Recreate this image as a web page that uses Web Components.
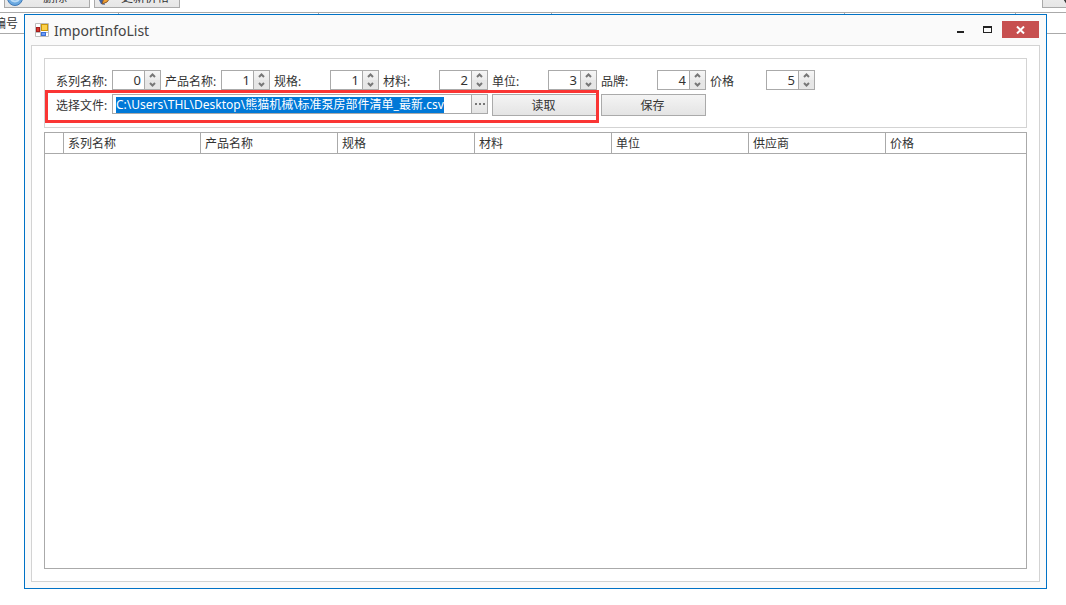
<!DOCTYPE html>
<html lang="zh-CN">
<head>
<meta charset="utf-8">
<title>ImportInfoList</title>
<style>
html, body { height: 100%; }
body { margin: 0; background: #fff; color: #333; overflow: hidden; font: 12px/16px "Noto Sans", "Noto Sans CJK SC", sans-serif; }
</style>
</head>
<body>
<desktop-shell>
  <main-screen></main-screen>
  <app-window slot="dialog" heading="ImportInfoList">
    <import-form></import-form>
    <data-grid columns="系列名称,产品名称,规格,材料,单位,供应商,价格"></data-grid>
  </app-window>
</desktop-shell>
<script>
const attach = (el, html) => { el.attachShadow({ mode: "open" }).innerHTML = html; return el.shadowRoot; };

customElements.define("desktop-shell", class extends HTMLElement {
  constructor() {
    super();
    attach(this, `<style>
      :host { display: block; position: relative; height: 100%; }
      .dialog { position: absolute; inset: 14px 19px 16px 24px; display: flex; }
      ::slotted(app-window) { flex: 1; min-width: 0; }
    </style><slot></slot><div class="dialog"><slot name="dialog"></slot></div>`);
  }
});

customElements.define("main-screen", class extends HTMLElement {
  constructor() {
    super();
    attach(this, `<style>
      :host { display: block; overflow: hidden; }
      .bar { display: flex; align-items: flex-end; gap: 4px; height: 8px; padding: 0 0 4px 4px; overflow: hidden; }
      button { box-sizing: border-box; width: 86px; height: 24px; flex: none; display: flex; align-items: center;
        padding: 4px 2px 0; border: 1px solid #aaa; background: linear-gradient(#f4f4f4, #e6e6e6); font: inherit; color: #333; white-space: nowrap; }
      span { flex: 1; text-align: center; }
      .last { margin-left: auto; width: 60px; margin-right: -36px; padding: 0 0 0 16px; }
      svg { flex: none; }
      table { width: calc(100% + 10px); margin-left: -10px; table-layout: fixed; border-collapse: collapse; }
      th { box-sizing: border-box; height: 21px; padding: 2px 4px 0 3px; border: 1px solid #aaa; font-weight: normal; text-align: left; }
      th:last-child { border-right: 0; }
    </style>
    <div class="bar">
      <button type="button"><svg width="16" height="16"><circle cx="8" cy="8" r="7.5" fill="#6aa8e0" stroke="#3f78b5"/><path d="M4 10q4 3 8 0" fill="none" stroke="#b9dbf7" stroke-width="2"/></svg><span>删除</span></button>
      <button type="button"><svg width="16" height="16"><path d="M1 8l5 2 2 5-4-1z" fill="#3f5f9f"/><path d="M5 14l2-6 6-7 3 3-6 8z" fill="#f0a030" stroke="#8a5a30"/></svg><span>更新价格</span></button>
      <button type="button" class="last" aria-label="更多"><svg width="16" height="16"><path d="M2 6l5 8 7-8" fill="none" stroke="#333" stroke-width="1.500"/></svg></button>
    </div>
    <table><colgroup><col width="128"><col width="200"><col width="233"><col width="293"><col width="171"><col></colgroup>
      <tr><th>编号</th><th></th><th></th><th></th><th></th><th></th></tr></table>`);
  }
});

customElements.define("app-window", class extends HTMLElement {
  constructor() {
    super();
    attach(this, `<style>
      :host { box-sizing: border-box; display: flex; flex-direction: column; border: 1px solid #0072c6; background: #fafafa; padding: 0 6px 6px; }
      header { display: flex; align-items: flex-start; height: 30px; }
      .icon { margin: 8px 5px 0 4px; flex: none; }
      h1 { margin: 6px auto 0 0; font-size: 14px; line-height: 20px; font-weight: normal; color: #444; }
      button { border: 0; padding: 0; margin-top: 6px; width: 27px; height: 17px; background: none; display: grid; place-items: center; }
      .close { width: 37px; background: #c75050; margin: 6px 1px 0; }
      main { flex: 1; display: flex; flex-direction: column; gap: 4px; border: 1px solid #d3d3d3; background: #fff; padding: 12px; }
      ::slotted(data-grid) { flex: 1; }
    </style>
    <header>
      <svg class="icon" width="14" height="14" viewBox="0 0 14 14">
        <path d="M.5.5h13v13H.5zM5.5.5v13M.5 4.5h5M.5 9.5h13" fill="#fff" stroke="#bdbdbd"/>
        <rect x="6.500" y="1.500" width="6" height="6" fill="#fcd14a" stroke="#c9960c"/>
        <rect x="1.500" y="4.500" width="3" height="4" fill="#d9372c" stroke="#a51d1d"/>
        <rect x="6.500" y="9.500" width="4" height="3" fill="#6a9cf5" stroke="#3a6fd8"/>
      </svg>
      <h1></h1>
      <button type="button" aria-label="Minimize"><svg width="9" height="9"><path d="M1 6h7v2H1z" fill="#222"/></svg></button>
      <button type="button" aria-label="Maximize"><svg width="9" height="7"><path d="M0 0h9v7H0zM1 2v4h7V2z" fill="#222" fill-rule="evenodd"/></svg></button>
      <button type="button" class="close" aria-label="Close"><svg width="9" height="8"><path d="M1 .5l7 7M8 .5l-7 7" stroke="#fff" stroke-width="2"/></svg></button>
    </header>
    <main><slot></slot></main>`);
  }
  connectedCallback() { this.shadowRoot.querySelector("h1").textContent = this.getAttribute("heading"); }
});

customElements.define("spin-field", class extends HTMLElement {
  constructor() {
    super();
    attach(this, `<style>
      :host { display: flex; width: 105px; height: 20px; }
      label { width: 56px; line-height: 24px; flex: none; white-space: nowrap; }
      .box { box-sizing: border-box; display: flex; width: 49px; height: 20px; border: 1px solid #aaa; background: #fff; }
      input { flex: 1; min-width: 0; box-sizing: border-box; border: 0; padding: 0 3px; margin: 0; background: none; text-align: right; font: inherit; font-size: 13px; color: #333; outline: 0; }
      .arrows { display: flex; flex-direction: column; width: 15px; border-left: 1px solid #aaa; }
      button { flex: 1; min-height: 0; border: 0; padding: 0; background: linear-gradient(#f6f6f6, #ececec); display: grid; place-items: center; }
      button + button { background: #e6e6e6; }
    </style>
    <label for="n"></label>
    <div class="box"><input id="n" type="text" inputmode="numeric">
      <div class="arrows">
        <button type="button" aria-label="+"><svg width="7" height="7"><path d="M1 5l2.500-2.500L6 5" fill="none" stroke="#777" stroke-width="2"/></svg></button>
        <button type="button" aria-label="-"><svg width="7" height="7"><path d="M1 2l2.500 2.500L6 2" fill="none" stroke="#777" stroke-width="2"/></svg></button>
      </div></div>`);
  }
  connectedCallback() {
    const r = this.shadowRoot, input = r.querySelector("input"), [up, down] = r.querySelectorAll("button");
    r.querySelector("label").textContent = this.getAttribute("label");
    input.value = this.getAttribute("value");
    up.onclick = () => { input.value = +input.value + 1; };
    down.onclick = () => { input.value = Math.max(0, input.value - 1); };
  }
});

customElements.define("import-form", class extends HTMLElement {
  constructor() {
    super();
    const fields = [["系列名称:", 0], ["产品名称:", 1], ["规格:", 1], ["材料:", 2], ["单位:", 3], ["品牌:", 4], ["价格", 5]];
    attach(this, `<style>
      :host { position: relative; box-sizing: border-box; display: flex; flex-direction: column; gap: 4px; border: 1px solid #d3d3d3; padding: 11px; }
      .row { display: flex; gap: 4px; align-items: flex-start; }
      .file { display: flex; width: 432px; height: 22px; }
      label { width: 56px; line-height: 24px; flex: none; }
      .box { flex: 1; box-sizing: border-box; display: flex; height: 20px; border: 1px solid #aaa; }
      input { flex: 1; min-width: 0; border: 0; padding: 1px 3px 0; margin: 0; outline: 0; font: inherit; color: #333; }
      input::selection { background: #0078d7; color: #fff; }
      button { box-sizing: border-box; width: 105px; height: 22px; padding: 2px 2px 0 0; border: 1px solid #aaa; background: linear-gradient(#f4f4f4, #e4e4e4); font: inherit; color: #333; }
      .browse { width: 16px; height: 18px; padding: 0; border-width: 0 0 0 1px; display: grid; place-items: center; }
      .mark { position: absolute; left: 0; top: 31px; width: 554px; height: 33px; box-sizing: border-box; border: 3px solid #fa3534; pointer-events: none; }
    </style>
    <div class="row">${fields.map(([f, v]) => `<spin-field label="${f}" value="${v}"></spin-field>`).join("")}</div>
    <div class="row">
      <div class="file"><label for="path">选择文件:</label>
        <div class="box"><input id="path" type="text" spellcheck="false" value="C:\\Users\\THL\\Desktop\\熊猫机械\\标准泵房部件清单_最新.csv">
        <button type="button" class="browse" aria-label="浏览"><svg width="10" height="2"><path d="M0 0h2v2H0zM4 0h2v2H4zM8 0h2v2H8z" fill="#777"/></svg></button></div></div>
      <button type="button">读取</button>
      <button type="button">保存</button>
    </div>
    <div class="mark"></div>`);
  }
  connectedCallback() {
    const input = this.shadowRoot.querySelector("#path");
    input.focus();
    input.select();
  }
});

customElements.define("data-grid", class extends HTMLElement {
  connectedCallback() {
    const names = this.getAttribute("columns").split(",");
    attach(this, `<style>
      :host { display: block; border: 1px solid #aaa; background: #fff; }
      table { width: 100%; table-layout: fixed; border-collapse: separate; border-spacing: 0; }
      th { box-sizing: border-box; height: 21px; padding: 2px 4px 0; border-right: 1px solid #aaa; border-bottom: 1px solid #aaa; font-weight: normal; text-align: left; }
      th:last-child { border-right: 0; }
    </style>
    <table><colgroup><col width="19">${names.map((n, i) => i < names.length - 1 ? `<col width="137">` : "<col>").join("")}</colgroup>
      <thead><tr><th></th>${names.map(n => `<th scope="col">${n}</th>`).join("")}</tr></thead></table>`);
  }
});
</script>
</body>
</html>
